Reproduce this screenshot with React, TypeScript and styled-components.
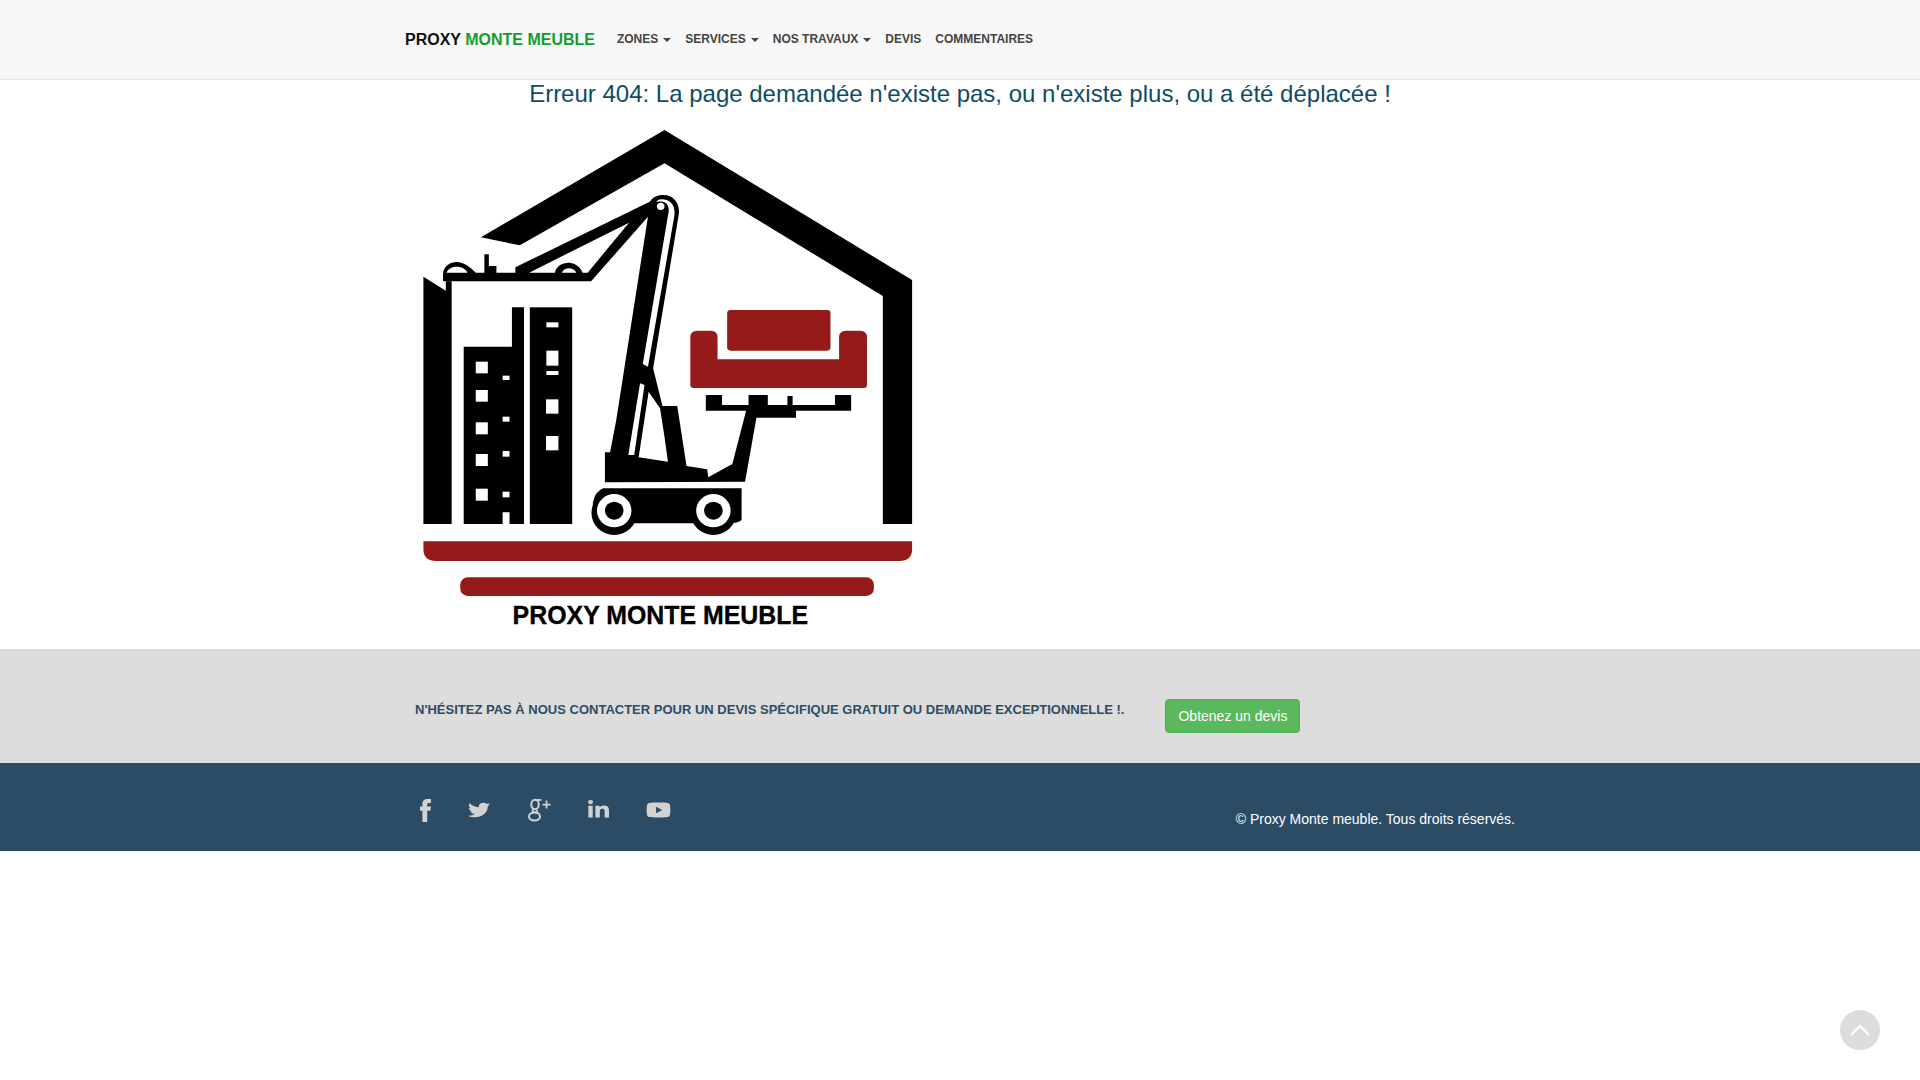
import React from "react";
import styled, { createGlobalStyle } from "styled-components";
import { FaTwitter, FaLinkedinIn, FaYoutube } from "react-icons/fa";

const GlobalStyle = createGlobalStyle`
  html, body {
    margin: 0;
    padding: 0;
    background: #fff;
    font-family: "Liberation Sans", Arial, sans-serif;
    font-size: 14px;
    color: #333;
  }
  * {
    box-sizing: border-box;
  }
`;

const Navbar = styled.nav`
  height: 80px;
  background: #f8f8f8;
  border-bottom: 1px solid #e7e7e7;
`;

const Container = styled.div`
  width: 1170px;
  margin: 0 auto;
  padding: 0 15px;
`;

const NavInner = styled(Container)`
  display: flex;
  align-items: center;
  height: 79px;
`;

const Brand = styled.a`
  padding: 0 15px;
  font-size: 16px;
  font-weight: 700;
  color: #111;
  white-space: nowrap;

  span {
    color: #159c2d;
  }
`;

const NavList = styled.ul`
  display: flex;
  list-style: none;
  margin: -2px 0 0;
  padding: 0;
`;

const NavItem = styled.li`
  display: flex;
  align-items: center;
  padding: 0 7px;
  font-size: 12px;
  font-weight: 700;
  color: #444;
  text-transform: uppercase;
  white-space: nowrap;
`;

const Caret = styled.b`
  display: inline-block;
  margin-left: 5px;
  margin-top: 2px;
  border-top: 4px solid #444;
  border-left: 4px solid transparent;
  border-right: 4px solid transparent;
`;

const ErrorTitle = styled.h1`
  margin: 1px 0 0;
  font-size: 24px;
  font-weight: 400;
  line-height: 26px;
  text-align: center;
  color: #0f4c64;
`;

const Logo = styled.svg`
  display: block;
  width: 540px;
  height: 524px;
  margin: 18px 0 0 10px;
`;

const ContactBand = styled.section`
  height: 114px;
  background: #dddddd;
`;

const ContactInner = styled(Container)`
  display: flex;
  align-items: flex-start;
  padding-top: 50px;
  padding-left: 40px;
`;

const ContactText = styled.p`
  margin: 3px 0 0;
  font-size: 13px;
  line-height: 15px;
  font-weight: 700;
  color: #2c4c66;
  text-transform: uppercase;
  white-space: nowrap;
`;

const QuoteButton = styled.a`
  display: block;
  margin-left: 41px;
  height: 34px;
  padding: 6px 12px;
  background: #5cb85c;
  border: 1px solid #4cae4c;
  border-radius: 4px;
  color: #fff;
  font-size: 14px;
  line-height: 20px;
  white-space: nowrap;
`;

const Footer = styled.footer`
  height: 88px;
  background: #2c4c66;
`;

const FooterInner = styled(Container)`
  display: flex;
  justify-content: space-between;
  height: 88px;
  padding-left: 45px;
  padding-right: 30px;
`;

const Socials = styled.div`
  display: flex;
  align-items: center;
  gap: 37px;
  padding-top: 6px;
`;

const SocialLink = styled.a<{ $w: number; $h: number }>`
  display: block;
  width: ${(p) => p.$w}px;
  height: ${(p) => p.$h}px;
  color: #d2d2d2;

  svg {
    display: block;
    width: 100%;
    height: 100%;
  }
`;

const Copyright = styled.p`
  margin: 46px 0 0;
  font-size: 14px;
  line-height: 20px;
  color: #fff;
`;

const BackToTop = styled.a`
  position: fixed;
  right: 40px;
  bottom: 30px;
  width: 40px;
  height: 40px;
  border-radius: 50%;
  background: #dcdcdc;
  display: flex;
  align-items: center;
  justify-content: center;
`;

const LogoArt = () => (
  <Logo viewBox="0 15 1568 1572" preserveAspectRatio="none" role="img" aria-label="Proxy Monte Meuble">
    {/* roof and walls */}
    <path d="M235 352L768 30L1487 480V1212H1402V528L768 130L348 376Z" fill="#000" />
    <path d="M68 470L133 512V484H150V1212H68Z" fill="#000" />

    {/* crane top plate */}
    <path
      d="M125 484V462C125 440 145 426 165 426C185 426 205 442 220 458H245V403H258V438H280V458H335V442L725 245C735 230 750 225 765 225C795 225 812 250 810 280L735 745L762 858H805L832 1038L892 1048L895 1072L965 1032L1005 872H888V825H935V855H1012V825H1068V855H1125V828H1140V855H1263V825H1310V872H1150V893H1035L1002 1085L595 1087V997H610L628 900L720 290L555 484Z"
      fill="#000"
    />
    <path d="M135 458C140 445 152 440 165 440C178 440 190 446 196 458Z" fill="#fff" />
    <path d="M375 458L665 308L545 458H530C525 440 505 428 490 428C470 428 452 440 450 458Z" fill="#fff" />
    <path d="M470 458C475 448 482 445 490 445C500 445 508 450 512 458Z" fill="#fff" />
    <path
      d="M780 275L705 732L720 740L797 285C800 252 782 238 760 238C750 238 745 243 745 246C770 240 783 255 780 275Z"
      fill="#fff"
    />
    <circle cx="757" cy="259" r="11" fill="#fff" />
    <path d="M697 790L710 795L680 1005L663 1005Z" fill="#fff" />
    <path d="M722 815L755 865L768 950L778 1025L693 1012Z" fill="#fff" />

    {/* towers */}
    <path d="M185 680H325V562H360V1212H318V1177H298V1212H185Z" fill="#000" />
    <rect x="377" y="562" width="123" height="650" fill="#000" />
    <g fill="#fff">
      <rect x="220" y="725" width="35" height="35" />
      <rect x="220" y="810" width="35" height="35" />
      <rect x="220" y="907" width="35" height="36" />
      <rect x="220" y="1002" width="35" height="36" />
      <rect x="220" y="1106" width="35" height="36" />
      <rect x="298" y="767" width="20" height="13" />
      <rect x="298" y="890" width="20" height="15" />
      <rect x="298" y="993" width="20" height="17" />
      <rect x="298" y="1115" width="20" height="17" />
      <rect x="425" y="607" width="35" height="15" />
      <rect x="425" y="692" width="35" height="45" />
      <rect x="425" y="753" width="35" height="12" />
      <rect x="424" y="838" width="36" height="43" />
      <rect x="424" y="948" width="36" height="43" />
    </g>

    {/* chassis */}
    <path d="M590 1105H992V1198Q990 1205 975 1208L850 1210H680L560 1198V1150Q565 1115 590 1105Z" fill="#000" />
    <circle cx="622" cy="1179" r="66" fill="#000" />
    <circle cx="910" cy="1179" r="66" fill="#000" />
    <circle cx="622" cy="1172" r="50" fill="#fff" />
    <circle cx="910" cy="1172" r="50" fill="#fff" />
    <circle cx="622" cy="1172" r="27" fill="#000" />
    <circle cx="910" cy="1172" r="27" fill="#000" />

    {/* sofa and bars */}
    <g fill="#951a1a">
      <rect x="950" y="570" width="300" height="122" rx="10" />
      <path d="M843 652Q843 632 863 632H903Q922 632 922 652V718H1275V652Q1275 632 1295 632H1336Q1356 632 1356 652V795Q1356 804 1346 804H853Q843 804 843 795Z" />
      <path d="M68 1264H1487V1288Q1487 1323 1450 1323H105Q68 1323 68 1288Z" />
      <rect x="175" y="1372" width="1201" height="56" rx="22" />
    </g>

    <text
      x="327"
      y="1513"
      textLength="858"
      lengthAdjust="spacingAndGlyphs"
      fontFamily="'Liberation Sans', Arial, sans-serif"
      fontWeight="700"
      fontSize="76"
      stroke="#000"
      strokeWidth="1"
      fill="#000"
    >
      PROXY MONTE MEUBLE
    </text>
  </Logo>
);

const FacebookIcon = () => (
  <svg viewBox="0 0 32 67" preserveAspectRatio="none" fill="currentColor">
    <path d="M7 67V34H0V22H7V14C7 4 14 0 23 0H32V12H26C22 12 21 14 21 17V22H32L30 34H21V67Z" />
  </svg>
);

const GooglePlusIcon = () => (
  <svg viewBox="-2 0 48 48" fill="none" stroke="currentColor">
    <ellipse cx="14" cy="13" rx="7.5" ry="9.5" strokeWidth="4" />
    <ellipse cx="13" cy="37" rx="11" ry="8" strokeWidth="4" />
    <path d="M11 22C6 26 10 27 15 29C20 31 19 27 17 24" strokeWidth="3.5" />
    <path d="M15 4H27" strokeWidth="3.5" />
    <path d="M37 5V21M29 13H45" strokeWidth="3.5" />
  </svg>
);

const App = () => {
  return (
    <>
      <GlobalStyle />
      <Navbar>
        <NavInner>
          <Brand>
            PROXY <span>MONTE MEUBLE</span>
          </Brand>
          <NavList>
            <NavItem>
              Zones <Caret />
            </NavItem>
            <NavItem>
              Services <Caret />
            </NavItem>
            <NavItem>
              Nos travaux <Caret />
            </NavItem>
            <NavItem>Devis</NavItem>
            <NavItem>Commentaires</NavItem>
          </NavList>
        </NavInner>
      </Navbar>

      <Container>
        <ErrorTitle>Erreur 404: La page demandée n'existe pas, ou n'existe plus, ou a été déplacée !</ErrorTitle>
        <LogoArt />
      </Container>

      <ContactBand>
        <ContactInner>
          <ContactText>N'hésitez pas à nous contacter pour un devis spécifique gratuit ou demande exceptionnelle !.</ContactText>
          <QuoteButton>Obtenez un devis</QuoteButton>
        </ContactInner>
      </ContactBand>

      <Footer>
        <FooterInner>
          <Socials>
            <SocialLink $w={11} $h={23}>
              <FacebookIcon />
            </SocialLink>
            <SocialLink $w={22} $h={18}>
              <FaTwitter preserveAspectRatio="none" />
            </SocialLink>
            <SocialLink $w={24} $h={24}>
              <GooglePlusIcon />
            </SocialLink>
            <SocialLink $w={21} $h={20}>
              <FaLinkedinIn preserveAspectRatio="none" />
            </SocialLink>
            <SocialLink $w={25} $h={20}>
              <FaYoutube preserveAspectRatio="none" />
            </SocialLink>
          </Socials>
          <Copyright>© Proxy Monte meuble. Tous droits réservés.</Copyright>
        </FooterInner>
      </Footer>

      <BackToTop>
        <svg width="22" height="14" viewBox="0 0 22 14" fill="none" stroke="#fff" strokeWidth="2.4">
          <path d="M2 12L11 3L20 12" />
        </svg>
      </BackToTop>
    </>
  );
};

export default App;
